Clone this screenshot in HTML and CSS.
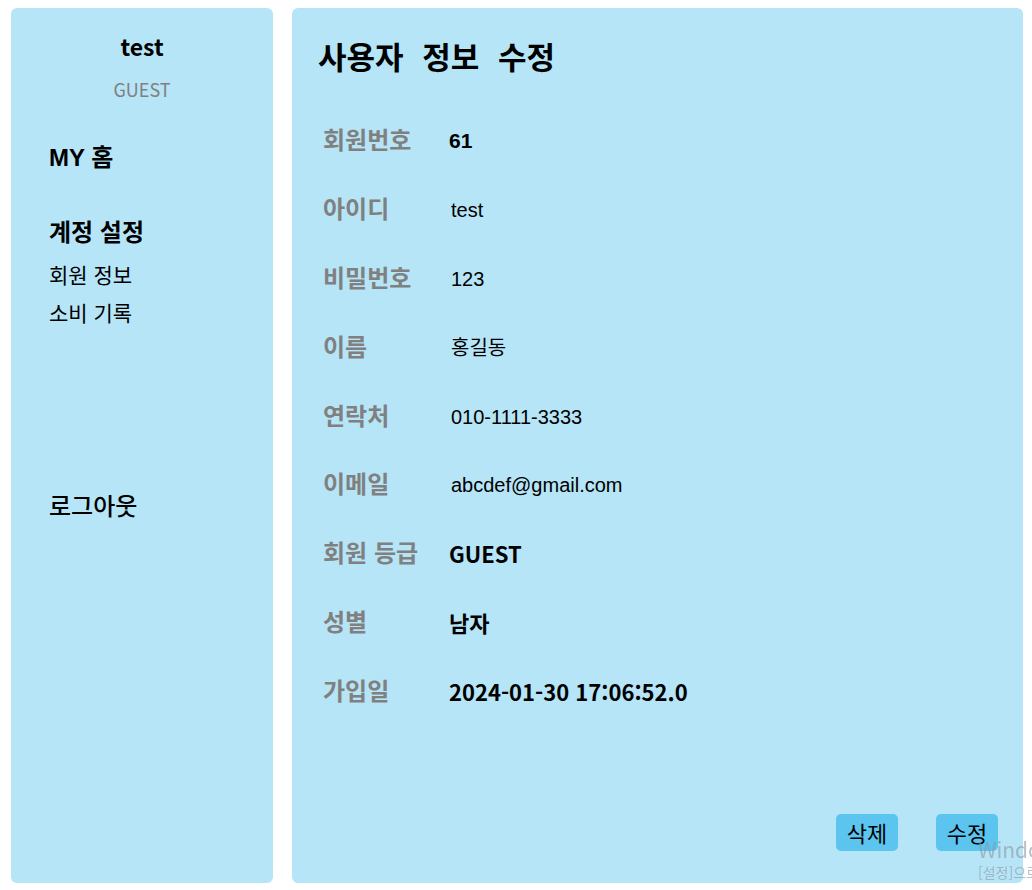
FILE: index.html
```html
<!DOCTYPE html>
<html lang="ko">
<head>
<meta charset="utf-8">
<title>사용자 정보 수정</title>
<link rel="stylesheet" href="styles.css">
</head>
<body>
<div class="page">
  <aside class="sidebar">
    <div class="user-name">test</div>
    <div class="user-grade">GUEST</div>
    <a class="menu-title menu-home">MY 홈</a>
    <div class="menu-title menu-account">계정 설정</div>
    <a class="menu-link menu-first">회원 정보</a>
    <a class="menu-link">소비 기록</a>
    <a class="menu-title menu-logout">로그아웃</a>
  </aside>
  <main class="content">
    <h1 class="title">사용자 정보 수정</h1>
    <div class="info">
      <div class="label">회원번호</div><div class="value bold-num">61</div>
      <div class="label">아이디</div><div class="value">test</div>
      <div class="label">비밀번호</div><div class="value">123</div>
      <div class="label">이름</div><div class="value">홍길동</div>
      <div class="label">연락처</div><div class="value">010-1111-3333</div>
      <div class="label">이메일</div><div class="value">abcdef@gmail.com</div>
      <div class="label">회원 등급</div><div class="value bold">GUEST</div>
      <div class="label">성별</div><div class="value bold">남자</div>
      <div class="label">가입일</div><div class="value bold">2024-01-30 17:06:52.0</div>
    </div>
    <div class="actions">
      <button class="btn">삭제</button>
      <button class="btn">수정</button>
    </div>
  </main>
</div>
<div class="watermark">
  <div class="wm-title">Windows 정품 인증</div>
  <div class="wm-sub">[설정]으로 이동하여 Windows를 정품 인증합니다.</div>
</div>
</body>
</html>
```
FILE: styles.css
```css
html, body {
  margin: 0;
  padding: 0;
  background: #ffffff;
  overflow: hidden;
}
body {
  font-family: "Noto Sans CJK KR", "Noto Sans", sans-serif;
  color: #000;
}
.page {
  box-sizing: border-box;
  height: 890px;
  display: flex;
  gap: 19px;
  padding: 8px 9px 7px 11px;
}
.sidebar {
  width: 262px;
  flex: none;
  background: #b5e5f7;
  border-radius: 6px;
  display: flex;
  flex-direction: column;
  padding: 23px 0 0 38px;
  box-sizing: border-box;
}
.user-name {
  margin-left: -38px;
  text-align: center;
  font-weight: 700;
  font-size: 23px;
  line-height: 30px;
}
.user-grade {
  margin-left: -38px;
  text-align: center;
  color: #808080;
  font-size: 18px;
  line-height: 22px;
  margin-top: 17px;
}
.menu-title {
  font-family: "Liberation Sans", "Noto Sans CJK KR", sans-serif;
  font-weight: 700;
  font-size: 24px;
  line-height: 30px;
}
.menu-home { margin-top: 43px; }
.menu-account { margin-top: 45px; }
.menu-link {
  font-family: "Liberation Sans", "Noto Sans CJK KR", sans-serif;
  font-size: 21px;
  line-height: 30px;
  margin-top: 8px;
}
.menu-first { margin-top: 13px; }
.menu-logout {
  margin-top: 163px;
  font-weight: 500;
  font-size: 24px;
}
.content {
  flex: 1;
  background: #b5e5f7;
  border-radius: 6px;
  display: flex;
  flex-direction: column;
  padding: 30px 25px 32px 26px;
  box-sizing: border-box;
}
.title {
  margin: 0;
  font-size: 31px;
  line-height: 36px;
  font-weight: 700;
  word-spacing: 10px;
}
.info {
  margin: 33px 0 0 5px;
  display: grid;
  grid-template-columns: 126px 1fr;
  grid-auto-rows: 68.8px;
  align-items: center;
}
.label {
  color: #808080;
  font-weight: 700;
  font-size: 24px;
  line-height: 30px;
  margin-top: -4px;
}
.value {
  font-family: "Liberation Sans", "Noto Sans CJK KR", sans-serif;
  font-size: 20px;
  line-height: 30px;
  padding-left: 2px;
}
.value.bold {
  font-family: "Noto Sans CJK KR", sans-serif;
  font-weight: 700;
  font-size: 22px;
  padding-left: 0;
  margin-top: -2px;
}
.value.bold-num {
  font-weight: 700;
  font-size: 21px;
  padding-left: 0;
}
.actions {
  margin-top: auto;
  display: flex;
  justify-content: flex-end;
  gap: 38px;
}
.btn {
  width: 62px;
  height: 37px;
  padding: 0;
  border: none;
  border-radius: 5px;
  background: #5bc4ef;
  color: #000;
  font-family: "Noto Sans CJK KR", sans-serif;
  font-size: 22px;
  line-height: 37px;
}
.watermark {
  position: fixed;
  left: 978px;
  top: 836px;
  white-space: nowrap;
  color: rgba(140, 150, 160, 0.6);
  font-family: "Noto Sans CJK KR", sans-serif;
}
.wm-title {
  font-size: 21px;
  line-height: 26px;
}
.wm-sub {
  font-size: 14px;
  line-height: 20px;
}
```
